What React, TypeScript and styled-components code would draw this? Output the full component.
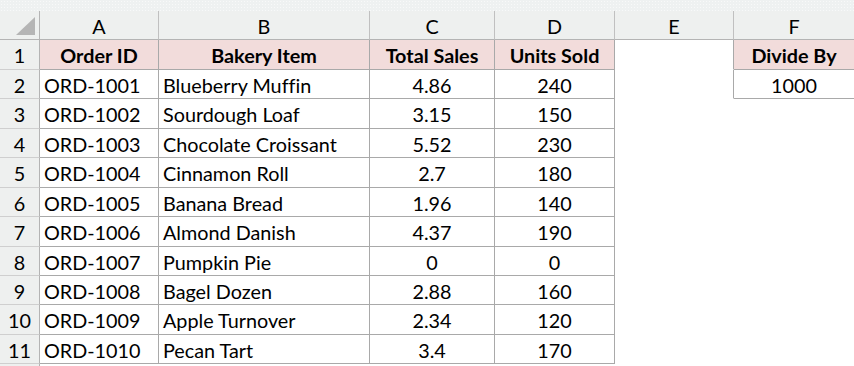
import React from "react";
import styled, { createGlobalStyle, css } from "styled-components";

const Global = createGlobalStyle`
  html, body { margin: 0; padding: 0; background: #ffffff; }
  body { width: 854px; height: 366px; overflow: hidden; }
`;

const FONT = `Lato, "Open Sans", "Liberation Sans", sans-serif`;

const Sheet = styled.div`
  width: 854px;
  height: 366px;
  overflow: hidden;
  background: #ffffff;
  display: flex;
  flex-direction: column;
  font-family: ${FONT};
  font-variant-ligatures: none;
  color: #000000;
`;

const TopStrip = styled.div`
  height: 11px;
  flex: none;
  background-color: #eef1f1;
  background-image: radial-gradient(#f8f9f9 0.6px, transparent 0.8px);
  background-size: 3px 3px;
`;

const Grid = styled.div`
  display: grid;
  grid-template-columns: 40px 119px 211px 125px 120px 119px 121px;
  grid-template-rows: 29px 30px 29px 30px 29px 30px 29px 30px 29px 29px 30px 29px 20px;
`;

type CellProps = {
  $kind: "colhead" | "rowhead" | "data" | "blank";
  $align?: "left" | "center";
  $bold?: boolean;
  $fill?: boolean;
  $br?: boolean;
  $bb?: boolean;
};

const Cell = styled.div<CellProps>`
  box-sizing: border-box;
  display: flex;
  align-items: center;
  justify-content: ${(p) => (p.$align === "left" ? "flex-start" : "center")};
  padding: ${(p) => (p.$align === "left" ? "1px 0 0 4px" : "1px 0 0 0")};
  font-size: 19.8px;
  font-weight: ${(p) => (p.$bold ? 700 : 400)};
  white-space: nowrap;
  overflow: hidden;
  background: ${(p) => (p.$fill ? "#f2dcdb" : "#ffffff")};
  border-right: 1px solid ${(p) => (p.$br ? "#a9a9a9" : "transparent")};
  border-bottom: 1px solid ${(p) => (p.$bb ? "#a9a9a9" : "transparent")};
  ${(p) =>
    p.$kind === "colhead" &&
    css`
      background: #eef0ef;
      border-right: 1px solid #c0c0c0;
      border-bottom: 1px solid #b4b4b4;
    `}
  ${(p) =>
    p.$kind === "rowhead" &&
    css`
      background: #eef0ef;
      border-right: 1px solid #b4b4b4;
      border-bottom: 1px solid #cfcfcf;
    `}
`;

const Corner = styled(Cell)`
  position: relative;
  border-right: 1px solid #b4b4b4;
`;

const Triangle = styled.div`
  position: absolute;
  right: 4px;
  bottom: 4px;
  width: 0;
  height: 0;
  border-left: 19px solid transparent;
  border-bottom: 18px solid #b5b5b5;
`;

type Row = { id: string; item: string; sales: string; units: string };

const rows: Row[] = [
  { id: "ORD-1001", item: "Blueberry Muffin", sales: "4.86", units: "240" },
  { id: "ORD-1002", item: "Sourdough Loaf", sales: "3.15", units: "150" },
  { id: "ORD-1003", item: "Chocolate Croissant", sales: "5.52", units: "230" },
  { id: "ORD-1004", item: "Cinnamon Roll", sales: "2.7", units: "180" },
  { id: "ORD-1005", item: "Banana Bread", sales: "1.96", units: "140" },
  { id: "ORD-1006", item: "Almond Danish", sales: "4.37", units: "190" },
  { id: "ORD-1007", item: "Pumpkin Pie", sales: "0", units: "0" },
  { id: "ORD-1008", item: "Bagel Dozen", sales: "2.88", units: "160" },
  { id: "ORD-1009", item: "Apple Turnover", sales: "2.34", units: "120" },
  { id: "ORD-1010", item: "Pecan Tart", sales: "3.4", units: "170" },
];

const letters = ["A", "B", "C", "D", "E", "F"];

export default function App() {
  return (
    <>
      <Global />
      <Sheet>
        <TopStrip />
        <Grid>
          <Corner $kind="colhead">
            <Triangle />
          </Corner>
          {letters.map((l) => (
            <Cell key={l} $kind="colhead">
              {l}
            </Cell>
          ))}

          <Cell $kind="rowhead">1</Cell>
          <Cell $kind="data" $bold $fill $br $bb>Order ID</Cell>
          <Cell $kind="data" $bold $fill $br $bb>Bakery Item</Cell>
          <Cell $kind="data" $bold $fill $br $bb>Total Sales</Cell>
          <Cell $kind="data" $bold $fill $br $bb>Units Sold</Cell>
          <Cell $kind="blank" $br />
          <Cell $kind="data" $bold $fill $br $bb>Divide By</Cell>

          {rows.map((r, i) => (
            <React.Fragment key={r.id}>
              <Cell $kind="rowhead">{i + 2}</Cell>
              <Cell $kind="data" $align="left" $br $bb>{r.id}</Cell>
              <Cell $kind="data" $align="left" $br $bb>{r.item}</Cell>
              <Cell $kind="data" $br $bb>{r.sales}</Cell>
              <Cell $kind="data" $br $bb>{r.units}</Cell>
              <Cell $kind="blank" $br={i === 0} />
              {i === 0 ? (
                <Cell $kind="data" $br $bb>1000</Cell>
              ) : (
                <Cell $kind="blank" />
              )}
            </React.Fragment>
          ))}

          <Cell $kind="rowhead" />
        </Grid>
      </Sheet>
    </>
  );
}
